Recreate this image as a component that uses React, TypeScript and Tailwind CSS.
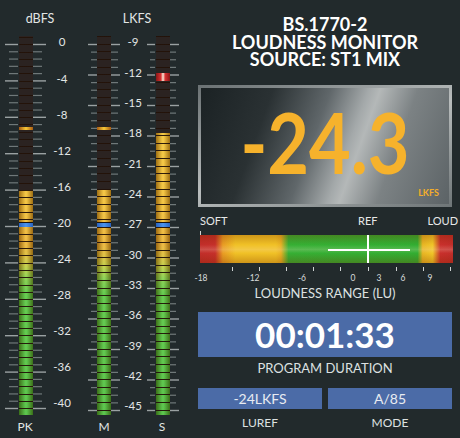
import React from "react";

const BAR_H = 379;

type Tick = { y: number; long: boolean };

function makeTicks(count: number, step: number, every: number): Tick[] {
  const out: Tick[] = [];
  for (let k = 0; k <= count; k++) out.push({ y: 8 + step * k, long: k % every === 0 });
  return out;
}

const pkTicks = makeTicks(50, 7.28, 5);
const lkTicks = makeTicks(48, 7.625, 4);

function TickRail({
  ticks,
  width,
  longFrom,
  longTo,
  shortFrom,
  shortTo,
}: {
  ticks: Tick[];
  width: number;
  longFrom: number;
  longTo: number;
  shortFrom: number;
  shortTo: number;
}) {
  return (
    <svg width={width} height={BAR_H} className="shrink-0">
      {ticks.map((t, i) => (
        <line
          key={i}
          x1={t.long ? longFrom : shortFrom}
          x2={t.long ? longTo : shortTo}
          y1={t.y + 0.5}
          y2={t.y + 0.5}
          stroke={t.long ? "#9aa1a2" : "#6f7879"}
          strokeWidth={t.long ? 1.4 : 1.2}
        />
      ))}
    </svg>
  );
}

function Bar({ litTop, peak, red, lines }: { litTop: number; peak: number; red?: boolean; lines: "pk" | "lk" }) {
  return (
    <div className="relative h-[379px] w-[14px] shrink-0 overflow-hidden bg-[#2b2321]">
      {/* lit part, colour fixed to the full bar height */}
      <div
        className="absolute inset-x-0 bottom-0 bg-[linear-gradient(to_bottom,#f4c224_0%,#f0b822_45%,#e8aa20_55%,#d8b424_58%,#b4c830_61%,#74c838_64%,#44c030_68%,#38b82c_100%)] bg-bottom bg-[length:100%_379px]"
        style={{ height: BAR_H - litTop }}
      >
        <div className="absolute inset-0 bg-[linear-gradient(to_right,rgba(60,20,0,0.45),rgba(255,255,230,0.18)_45%,rgba(255,255,230,0.18)_55%,rgba(60,20,0,0.45))]" />
      </div>
      {lines === "pk" ? (
        <div className="absolute inset-x-0 top-[0.7px] bottom-0 bg-[repeating-linear-gradient(to_bottom,rgba(35,18,8,0.95)_0_1px,transparent_1px_7.28px)]" />
      ) : (
        <div className="absolute inset-x-0 top-[0.4px] bottom-0 bg-[repeating-linear-gradient(to_bottom,rgba(35,18,8,0.95)_0_1px,transparent_1px_7.625px)]" />
      )}
      {/* reference marker */}
      <div className="absolute inset-x-0 top-[186px] h-[1px] bg-[#1a1410]" />
      <div className="absolute inset-x-0 top-[187px] h-[4px] bg-[linear-gradient(to_right,#2a64c0,#4a94f0,#2a64c0)]" />
      {/* peak hold */}
      {red ? (
        <div
          className="absolute inset-x-0 h-[8px] bg-[linear-gradient(to_right,#8a1616,#d83232_35%,#f2c2b4_46%,#f2c2b4_54%,#d83232_65%,#8a1616)]"
          style={{ top: peak }}
        />
      ) : (
        <div
          className="absolute inset-x-0 h-[3px] bg-[linear-gradient(to_right,#a85a10,#f8c838,#a85a10)]"
          style={{ top: peak }}
        />
      )}
    </div>
  );
}

const dbfs = ["0", "-4", "-8", "-12", "-16", "-20", "-24", "-28", "-32", "-36", "-40"];
const lkfs = ["-9", "-12", "-15", "-18", "-21", "-24", "-27", "-30", "-33", "-36", "-39", "-42", "-45"];

function Meters() {
  return (
    <div className="flex w-[190px] shrink-0 flex-col text-[#e2e6e6]">
      <div className="flex h-[36px] items-center pt-[3px] text-[12.5px]">
        <div className="w-[80px] text-center">dBFS</div>
        <div className="ml-[32px] w-[50px] text-center">LKFS</div>
      </div>
      <div className="flex h-[379px]">
        <div className="flex pl-[4px]">
          <TickRail ticks={pkTicks} width={15} longFrom={1} longTo={14} shortFrom={5} shortTo={14} />
          <Bar litTop={154} peak={91} lines="pk" />
          <TickRail ticks={pkTicks} width={14} longFrom={0} longTo={13} shortFrom={0} shortTo={9} />
        </div>
        <div className="-mt-[12px] flex w-[30px] flex-col text-[11.5px]">
          {dbfs.map((l) => (
            <div key={l} className="flex h-[36.1px] shrink-0 items-center justify-center">
              {l}
            </div>
          ))}
        </div>
        <div className="ml-[10px] flex">
          <TickRail ticks={lkTicks} width={10} longFrom={1} longTo={10} shortFrom={4} shortTo={10} />
          <Bar litTop={154} peak={91} lines="lk" />
          <TickRail ticks={lkTicks} width={9} longFrom={0} longTo={9} shortFrom={0} shortTo={7} />
        </div>
        <div className="-mt-[9.2px] flex w-[26px] flex-col text-[11.5px]">
          {lkfs.map((l) => (
            <div key={l} className="flex h-[30.33px] shrink-0 items-center justify-center">
              {l}
            </div>
          ))}
        </div>
        <div className="flex">
          <TickRail ticks={lkTicks} width={10} longFrom={1} longTo={9} shortFrom={4} shortTo={9} />
          <Bar litTop={97} peak={37} red lines="lk" />
          <TickRail ticks={lkTicks} width={10} longFrom={0} longTo={9} shortFrom={0} shortTo={6} />
        </div>
      </div>
      <div className="flex pt-[5px] text-[12px] leading-[14px]">
        <div className="w-[50px] text-center">PK</div>
        <div className="ml-[34px] w-[40px] text-center">M</div>
        <div className="ml-[18px] w-[40px] text-center">S</div>
      </div>
    </div>
  );
}

const rangeTicks = [32, 59, 86, 113, 140, 168, 196, 223, 250];
const rangeLabels: [string, number][] = [
  ["-18", 3],
  ["-12", 55],
  ["-6", 104],
  ["0", 155],
  ["3", 181],
  ["6", 205],
  ["9", 232],
];

function RangeBar() {
  return (
    <div className="flex flex-col">
      <div className="-mr-[6px] mt-[7px] flex h-[14px] items-center pl-[2px] text-[11px] leading-[14px] text-[#e6e8e8]">
        <span>SOFT</span>
        <span className="flex-1" />
        <span>REF</span>
        <span className="ml-[50px]">LOUD</span>
      </div>
      <div className="relative mt-[7px] ml-[2px] h-[28px] w-[253px]">
        <div className="absolute -top-[4px] left-0 h-[4px] w-[1px] bg-[#cfd3d3]" />
        <div className="h-full w-full bg-[linear-gradient(to_right,#c02a26_0%,#c42c26_6%,#e89a20_9%,#f0c022_14%,#f0c022_30%,#e8b020_32%,#32ae30_35%,#2eac2e_86%,#e8b420_88%,#f0c424_92%,#c82c28_95%,#c02a26_100%)]" />
        <div className="absolute inset-0 bg-[linear-gradient(to_bottom,rgba(120,40,0,0.28),rgba(255,255,255,0.02)_35%,rgba(255,235,220,0.2)_52%,rgba(255,255,255,0.02)_65%,rgba(120,40,0,0.28))]" />
        <div className="absolute left-[128px] top-[14px] h-[2px] w-[82px] bg-white" />
        <div className="absolute left-[167px] top-0 h-full w-[2px] bg-white" />
      </div>
      <svg width={260} height={9} className="ml-[2px]">
        {rangeTicks.map((x) => (
          <line key={x} x1={x + 0.5} x2={x + 0.5} y1={4} y2={8} stroke="#cfd3d3" strokeWidth={1} />
        ))}
      </svg>
      <div className="relative h-[12px] text-[8.5px] leading-[12px] text-[#d8dcdc]">
        {rangeLabels.map(([t, x]) => (
          <span key={t} className="absolute top-0 -translate-x-1/2" style={{ left: x }}>
            {t}
          </span>
        ))}
      </div>
      <div className="mt-[2px] text-center text-[13px] leading-[14px] text-[#dde1e1]">LOUDNESS RANGE (LU)</div>
    </div>
  );
}

export default function App() {
  return (
    <div className="flex h-[438px] w-[460px] overflow-hidden bg-[#222a2c] font-['Lato',sans-serif]">
      <Meters />
      <div className="flex w-[270px] flex-col pl-[8px] pr-[8px]">
        <div className="pt-[16px] text-center text-[18px] font-bold leading-[17.5px] text-white">
          <div>BS.1770-2</div>
          <div>LOUDNESS MONITOR</div>
          <div>SOURCE: ST1 MIX</div>
        </div>
        <div className="mt-[16.5px] h-[122px] bg-[linear-gradient(160deg,#6a7173,#b9bdbd_50%,#6e7577)] p-[3px]">
          <div className="relative flex h-full items-center justify-center bg-[linear-gradient(110deg,#1b2224_0%,#2a3133_25%,#60676a_45%,#a4a9aa_58%,#b4b8b8_62%,#7c8284_75%,#5c6366_100%)] pb-[11px]">
            <span className="inline-block scale-y-[1.17] text-[72px] font-bold leading-none text-[#f6b22c]">
              -24.3
            </span>
            <span className="absolute bottom-[7px] right-[10px] text-[9px] font-bold leading-none text-[#f3ae2a]">LKFS</span>
          </div>
        </div>
        <RangeBar />
        <div className="mt-[12px] flex h-[45px] items-center justify-center bg-[#4b6ba7] text-[35px] font-bold leading-none text-white">
          00:01:33
        </div>
        <div className="mt-[4px] text-center text-[13px] leading-[14px] text-[#dde1e1]">PROGRAM DURATION</div>
        <div className="mt-[13px] flex gap-[6px]">
          <div className="flex flex-1 flex-col">
            <div className="flex h-[21px] items-center justify-center bg-[#4b6ba7] text-[14px] text-[#e8ebf2]">-24LKFS</div>
            <div className="mt-[7px] text-center text-[12px] leading-[14px] text-[#dde1e1]">LUREF</div>
          </div>
          <div className="flex flex-1 flex-col">
            <div className="flex h-[21px] items-center justify-center bg-[#4b6ba7] text-[14px] text-[#e8ebf2]">A/85</div>
            <div className="mt-[7px] text-center text-[12px] leading-[14px] text-[#dde1e1]">MODE</div>
          </div>
        </div>
      </div>
    </div>
  );
}
